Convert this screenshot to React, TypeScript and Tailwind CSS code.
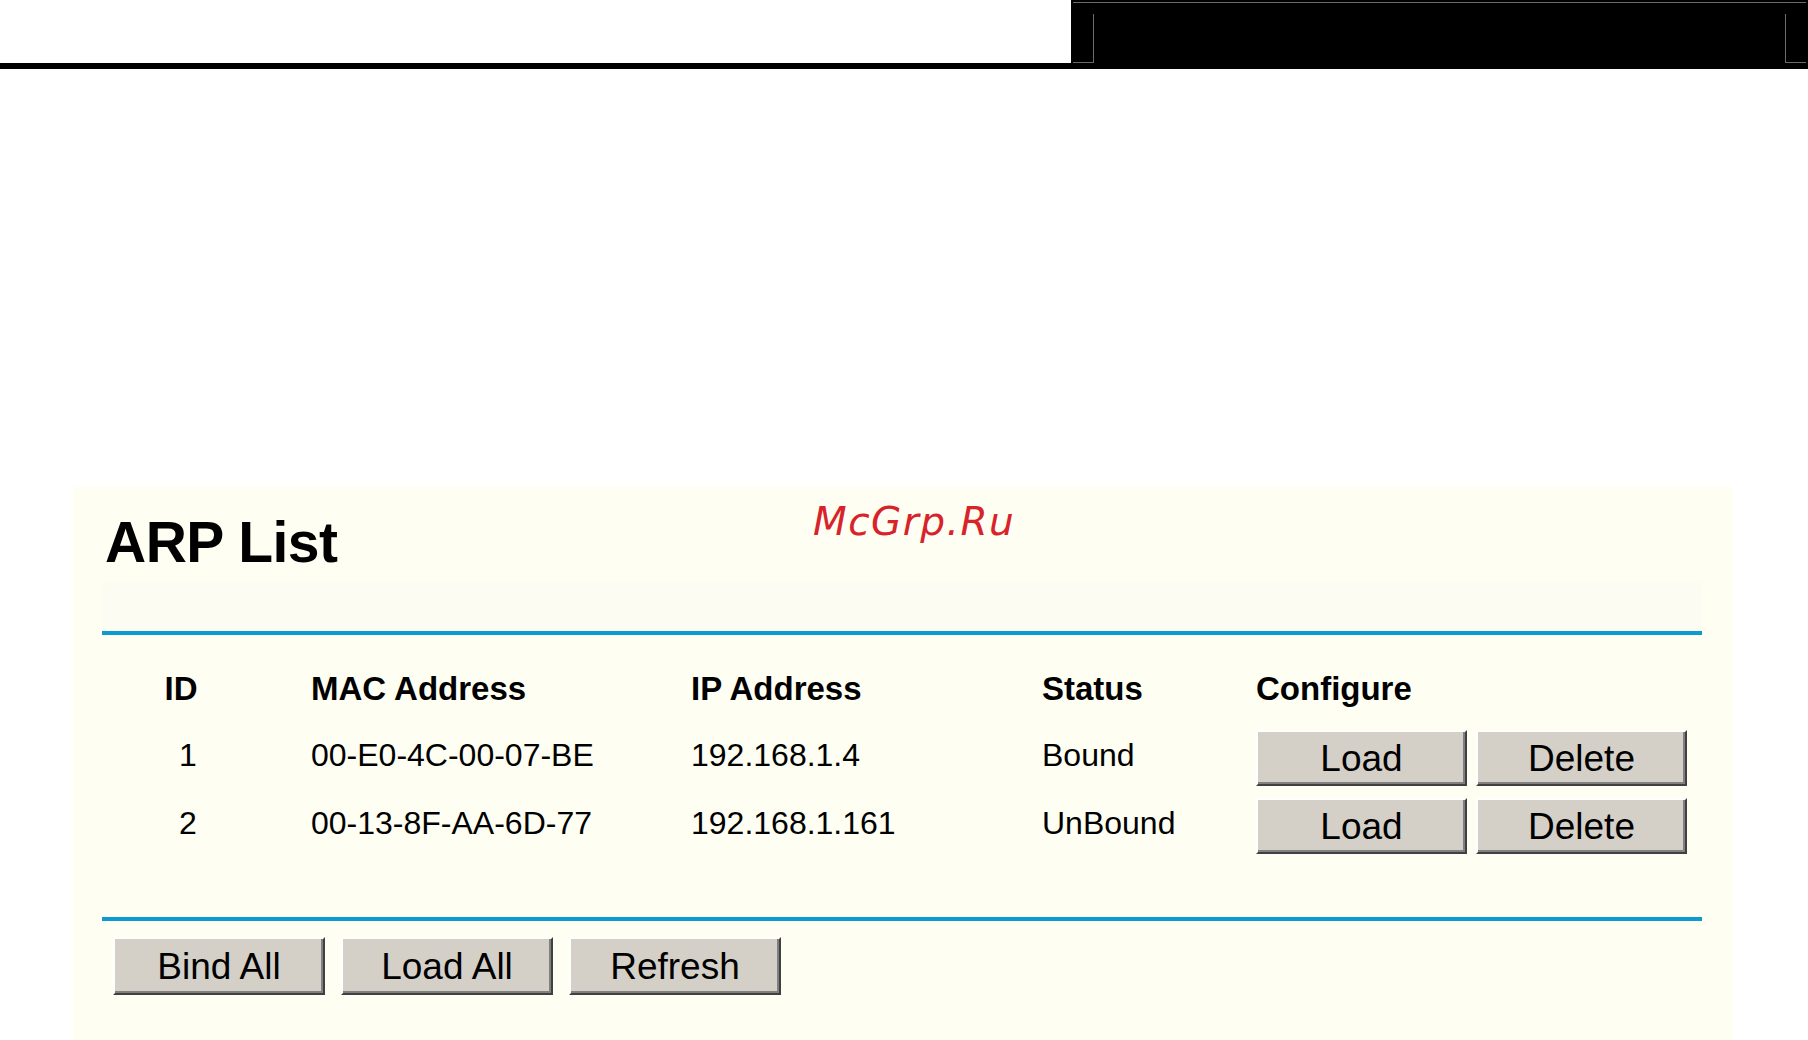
import React from 'react';

const rows = [
  { id: '1', mac: '00-E0-4C-00-07-BE', ip: '192.168.1.4', status: 'Bound' },
  { id: '2', mac: '00-13-8F-AA-6D-77', ip: '192.168.1.161', status: 'UnBound' },
];

function WinButton({ label, className }: { label: string; className: string }) {
  return (
    <button
      type="button"
      className={`flex items-center justify-center bg-[#d4d0c8] border-2 border-t-white border-l-white border-r-[#404040] border-b-[#404040] shadow-[inset_-2px_-2px_0_#808080] text-[37px] leading-none text-black ${className}`}
    >
      {label}
    </button>
  );
}

export default function App() {
  return (
    <div className="h-[1040px] overflow-hidden bg-white font-['Liberation_Sans',Arial,sans-serif] text-black">
      {/* Header strip */}
      <div className="flex h-[69px]">
        <div className="w-[1071px] h-[69px] bg-white border-b-[6px] border-black" />
        <div className="flex-1 h-[69px] bg-black flex flex-col pt-[2px] px-[2px]">
          <div className="h-px bg-[#6a6a6a]" />
          <div className="flex justify-between mt-[11px]">
            <div className="w-[21px] h-[49px] border-r border-b border-[#6a6a6a]" />
            <div className="w-[21px] h-[49px] border-l border-b border-[#6a6a6a]" />
          </div>
        </div>
      </div>

      <div className="pl-[73px] pt-[418px]">
        <div className="relative w-[1660px] h-[553px] bg-[#fefef3] pl-[29px]">
          <div className="absolute left-[740px] top-[15px] font-['DejaVu_Sans',sans-serif] italic text-[39px] leading-none tracking-[1.5px] text-[#d8232a]">
            McGrp.Ru
          </div>

          <h1 className="pt-[27px] pl-[3px] text-[57px] leading-[57px] font-bold tracking-[-0.5px]">ARP List</h1>

          <div className="mt-[12px] w-[1600px] h-[48px] bg-[#fcfcf3]" />
          <div className="w-[1600px] h-[4px] bg-[#0a9bd0]" />

          <div className="pl-[39px] pt-[29px]">
            <div className="grid grid-cols-[170px_380px_351px_214px_auto] h-[48px] items-center text-[33px] font-bold leading-none">
              <div className="w-[80px] text-center">ID</div>
              <div>MAC Address</div>
              <div>IP Address</div>
              <div>Status</div>
              <div>Configure</div>
            </div>

            <div className="mt-[12px]">
              {rows.map((r) => (
                <div
                  key={r.id}
                  className="grid grid-cols-[170px_380px_351px_214px_auto] h-[68px] items-center text-[32px] leading-none"
                >
                  <div className="w-[80px] text-center pl-[14px] pb-[6px]">{r.id}</div>
                  <div className="pb-[6px]">{r.mac}</div>
                  <div className="pb-[6px]">{r.ip}</div>
                  <div className="pb-[6px]">{r.status}</div>
                  <div className="flex gap-[9px]">
                    <WinButton label="Load" className="w-[211px] h-[56px]" />
                    <WinButton label="Delete" className="w-[211px] h-[56px]" />
                  </div>
                </div>
              ))}
            </div>
          </div>

          <div className="mt-[57px] w-[1600px] h-[4px] bg-[#0a9bd0]" />

          <div className="flex gap-[16px] pl-[11px] mt-[16px]">
            <WinButton label="Bind All" className="w-[212px] h-[58px]" />
            <WinButton label="Load All" className="w-[212px] h-[58px]" />
            <WinButton label="Refresh" className="w-[212px] h-[58px]" />
          </div>
        </div>
      </div>
    </div>
  );
}
